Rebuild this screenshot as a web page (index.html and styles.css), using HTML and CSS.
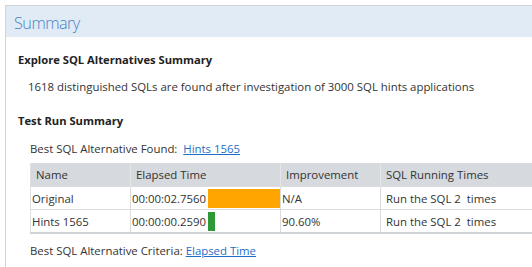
FILE: index.html
```html
<!DOCTYPE html>
<html lang="en">
<head>
  <meta charset="UTF-8" />
  <title>Summary</title>
  <link rel="stylesheet" href="styles.css">
</head>
<body>
  <div class="panel">
    <div class="panel-head">Summary</div>
    <div class="panel-body">
      <h4>Explore SQL Alternatives Summary</h4>
      <p class="line">1618 distinguished SQLs are found after investigation of 3000 SQL hints applications</p>

      <h4>Test Run Summary</h4>
      <div class="box">
        <p class="found">Best SQL Alternative Found:&nbsp; <a href="#">Hints 1565</a></p>
        <table class="runs">
          <thead>
            <tr>
              <th class="c-name">Name</th>
              <th class="c-time">Elapsed Time</th>
              <th class="c-imp">Improvement</th>
              <th class="c-run">SQL Running Times</th>
            </tr>
          </thead>
          <tbody>
            <tr>
              <td>Original</td>
              <td><div class="time"><span>00:00:02.7560</span><i class="bar orange" style="width:72px"></i></div></td>
              <td>N/A</td>
              <td class="pad">Run the SQL 2&nbsp; times</td>
            </tr>
            <tr>
              <td>Hints 1565</td>
              <td><div class="time"><span>00:00:00.2590</span><i class="bar green" style="width:7px"></i></div></td>
              <td>90.60%</td>
              <td class="pad">Run the SQL 2&nbsp; times</td>
            </tr>
          </tbody>
        </table>
        <p class="criteria">Best SQL Alternative Criteria: <a href="#">Elapsed Time</a></p>
      </div>
    </div>
  </div>
</body>
</html>
```

FILE: styles.css
```css
body {
  margin: 0;
  padding: 5px 0 0 5px;
  background: white;
  font-family: "Open Sans", "Noto Sans", sans-serif;
  font-size: 11.4px;
  color: #333;
  overflow: hidden;
  height: 267px;
  box-sizing: border-box;
}

.panel {
  border-top: 1px solid #d4d4d4;
  border-left: 1px solid #d4d4d4;
  width: 540px;
  height: 262px;
  box-sizing: border-box;
  overflow: hidden;
}

.panel-head {
  background: #e1ebf5;
  color: #4a80c7;
  font-size: 16.2px;
  font-weight: 300;
  letter-spacing: -0.5px;
  height: 29px;
  line-height: 31px;
  padding: 2px 0 0 8px;
}

.panel-body {
  padding: 0 0 0 12px;
}

h4 {
  margin: 0;
  font-size: 11.2px;
  font-weight: 700;
  color: #222;
}

.panel-body > h4:first-child {
  margin-top: 15px;
}

.line {
  margin: 12px 0 18px 10px;
  line-height: 16px;
}

.box {
  padding-left: 12px;
}

.found {
  margin: 13px 0 6px;
  line-height: 16px;
}

a {
  color: #1e6fc8;
  text-decoration: underline;
}

.runs {
  border-collapse: collapse;
  border-left: 1px solid #e0e0e0;
  border-bottom: 2px solid #d0d3d6;
  width: 520px;
}

.runs th {
  background: #d6d9dd;
  font-weight: 400;
  text-align: left;
  height: 23px;
  padding: 0 0 0 5px;
  border-right: 1px solid #e6e6e6;
  white-space: nowrap;
}

.runs td {
  height: 22px;
  padding: 0 0 0 1px;
  border-top: 1px solid #dcdcdc;
  border-right: 1px solid #dcdcdc;
  white-space: nowrap;
}

.runs td.pad {
  padding-left: 5px;
}

.c-name { width: 94px; }
.c-time { width: 143px; }
.c-imp { width: 94px; }

.time {
  display: flex;
  align-items: center;
}

.time span {
  width: 76px;
  flex-shrink: 0;
}

.bar {
  display: block;
  flex-shrink: 0;
  height: 19px;
}

.orange { background: #ffa500; }
.green { background: #2e9a35; }

.criteria {
  margin: 9px 0 0;
  line-height: 16px;
}
```
